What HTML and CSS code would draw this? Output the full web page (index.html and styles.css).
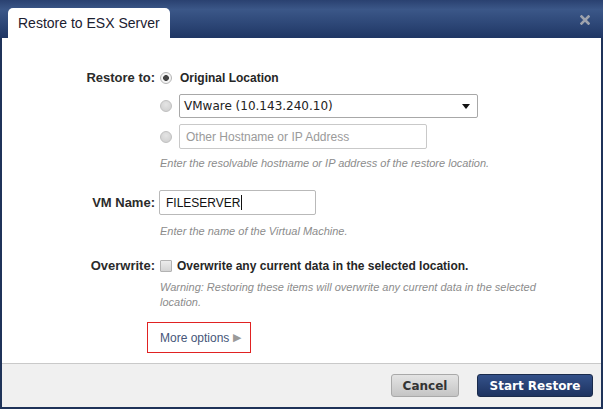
FILE: index.html
```html
<!DOCTYPE html>
<html>
<head>
<meta charset="utf-8">
<link rel="stylesheet" href="styles.css">
</head>
<body>
<div class="dialog">
  <div class="header">
    <div class="tab">Restore to ESX Server</div>
    <svg class="close" width="10" height="10" viewBox="0 0 10 10"><path d="M1.5 1.5 L8.5 8.5 M8.5 1.5 L1.5 8.5" stroke="#9ea3ad" stroke-width="2.6" stroke-linecap="square"/></svg>
  </div>
  <div class="body">
    <div class="field restore">
      <div class="label">Restore to:</div>
      <div class="content">
        <div class="opt opt-first"><span class="radio checked"></span><span class="opt-text">Original Location</span></div>
        <div class="opt opt-select"><span class="radio"></span><div class="select"><span>VMware (10.143.240.10)</span><span class="caret-down"></span></div></div>
        <div class="opt opt-input"><span class="radio"></span><div class="textbox host">Other Hostname or IP Address</div></div>
        <div class="help help-host">Enter the resolvable hostname or IP address of the restore location.</div>
      </div>
    </div>
    <div class="field vmname">
      <div class="label label-vm">VM Name:</div>
      <div class="content">
        <div class="textbox vm">FILESERVER<span class="cursor"></span></div>
        <div class="help help-vm">Enter the name of the Virtual Machine.</div>
      </div>
    </div>
    <div class="field overwrite">
      <div class="label">Overwrite:</div>
      <div class="content">
        <div class="opt check-row"><span class="checkbox"></span><span class="opt-text">Overwrite any current data in the selected location.</span></div>
        <div class="help warning">Warning: Restoring these items will overwrite any current data in the selected location.</div>
        <div class="more">More options <span class="tri">&#9654;</span></div>
      </div>
    </div>
  </div>
  <div class="footer">
    <button class="btn cancel">Cancel</button>
    <button class="btn primary">Start Restore</button>
  </div>
</div>
</body>
</html>
```

FILE: styles.css
```css
html, body {
  margin: 0;
  padding: 0;
  background: #fff;
}
body {
  font-family: "Liberation Sans", Arial, sans-serif;
  color: #2b2b2b;
}
.dialog {
  box-sizing: border-box;
  width: 603px;
  height: 409px;
  border: 2px solid #1f3359;
  border-top: 0;
  display: flex;
  flex-direction: column;
  background: #fff;
}
.header {
  height: 38px;
  flex: none;
  display: flex;
  align-items: flex-end;
  padding-left: 8px;
  margin: 0 -2px;
  background: linear-gradient(to bottom, #2a4170 0%, #3b5788 25%, #2e4878 60%, #1f3664 100%);
}
.tab {
  box-sizing: border-box;
  height: 30px;
  width: 162px;
  background: #fff;
  border-radius: 5px 5px 0 0;
  padding: 7px 0 0 10px;
  font-size: 14px;
  color: #1b2030;
}
.close {
  margin-left: auto;
  margin-right: 13px;
  align-self: center;
  margin-top: 2px;
}
.body {
  flex: 1;
  padding-top: 31px;
}
.field {
  display: grid;
  grid-template-columns: 153px 1fr;
  column-gap: 5px;
}
.label {
  text-align: right;
  font-size: 13px;
  font-weight: bold;
  line-height: 18px;
  color: #2b2b2b;
}
.content {
  display: flex;
  flex-direction: column;
  align-items: flex-start;
}
.opt {
  display: flex;
  align-items: center;
  gap: 7px;
}
.opt-first {
  height: 18px;
}
.opt-text {
  font-size: 12px;
  font-weight: bold;
  color: #262626;
  margin-left: 1px;
}
.opt-select {
  margin-top: 7px;
}
.opt-input {
  margin-top: 6px;
}
.radio {
  box-sizing: border-box;
  width: 12px;
  height: 12px;
  border-radius: 50%;
  border: 1px solid #c0c0c0;
  background: radial-gradient(circle at 50% 35%, #e4e4e4 0%, #cdcdcd 100%);
  flex: none;
}
.radio.checked {
  background: radial-gradient(circle, #444 0 2.6px, #f4f4f4 3.2px);
  border-color: #b5b5b5;
}
.select {
  box-sizing: border-box;
  width: 299px;
  height: 24px;
  border: 1px solid #a8a8a8;
  border-radius: 2px;
  display: flex;
  align-items: center;
  justify-content: space-between;
  padding: 0 7px 0 4px;
  font-family: "DejaVu Sans", Verdana, sans-serif;
  font-size: 12px;
  color: #222;
}
.caret-down {
  width: 0;
  height: 0;
  border-left: 4px solid transparent;
  border-right: 4px solid transparent;
  border-top: 5px solid #111;
}
.textbox {
  box-sizing: border-box;
  height: 25px;
  border: 1px solid #c9c9c9;
  border-radius: 2px;
  display: flex;
  align-items: center;
  padding-left: 6px;
  font-size: 12px;
}
.textbox.host {
  width: 248px;
  color: #9a9a9a;
}
.textbox.vm {
  width: 157px;
  margin-left: -1px;
  color: #111;
  border-color: #b9b9b9;
}
.cursor {
  display: inline-block;
  width: 1px;
  height: 15px;
  background: #111;
  margin-left: 1px;
}
.help {
  font-size: 11px;
  font-style: italic;
  color: #8c8c8c;
  line-height: 14px;
}
.help-host {
  margin-top: 7px;
}
.vmname {
  margin-top: 20px;
}
.label-vm {
  line-height: 25px;
}
.help-vm {
  margin-top: 9px;
}
.overwrite {
  margin-top: 19px;
}
.check-row {
  height: 18px;
  gap: 4px;
}
.checkbox {
  box-sizing: border-box;
  width: 12px;
  height: 12px;
  border: 1px solid #b3b3b3;
  border-radius: 1px;
  background: linear-gradient(#ececec, #d4d4d4);
  flex: none;
}
.warning {
  margin-top: 5px;
  line-height: 15px;
  width: 380px;
}
.more {
  box-sizing: border-box;
  margin-top: 12px;
  margin-left: -13px;
  width: 104px;
  height: 31px;
  border: 1px solid #e02222;
  padding-left: 12px;
  display: flex;
  align-items: center;
  font-size: 12px;
  color: #465679;
}
.tri {
  color: #9a9a9a;
  font-size: 11px;
  margin-left: 4px;
}
.footer {
  flex: none;
  box-sizing: border-box;
  height: 44px;
  border-top: 1px solid #c9c9c9;
  background: #f0f0f0;
  display: flex;
  justify-content: flex-end;
  align-items: flex-start;
  padding: 10px 8px 0 0;
  gap: 18px;
}
.btn {
  box-sizing: border-box;
  height: 23px;
  border-radius: 3px;
  font-family: "DejaVu Sans", Verdana, sans-serif;
  font-weight: bold;
  font-size: 12px;
  padding: 0;
  cursor: pointer;
}
.cancel {
  width: 68px;
  border: 1px solid #a9a9a9;
  background: linear-gradient(#e4e4e4, #c4c4c4);
  color: #333;
}
.primary {
  width: 116px;
  border: 1px solid #1a2b4c;
  background: linear-gradient(#34518a, #1d3360);
  color: #fff;
}
```
